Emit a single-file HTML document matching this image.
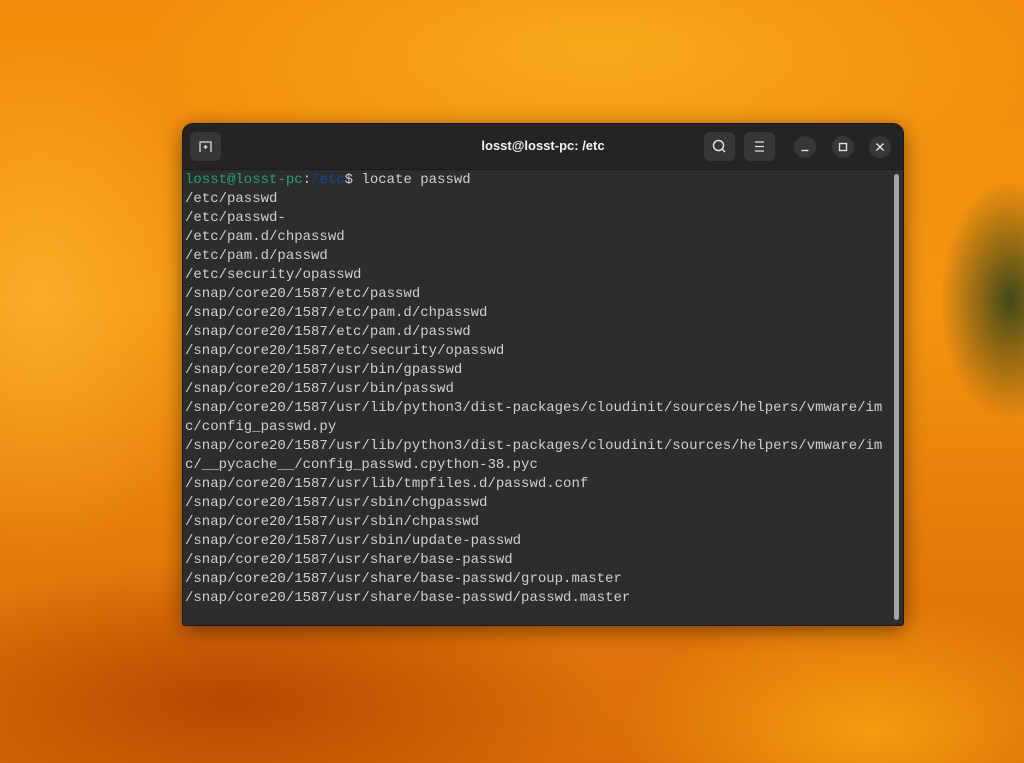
<!DOCTYPE html>
<html><head><meta charset="utf-8"><style>
html,body{margin:0;padding:0;width:1024px;height:763px;overflow:hidden}
body{position:relative;background:
radial-gradient(ellipse 70px 120px at 1010px 300px,rgba(45,65,25,.9),rgba(60,70,20,0) 100%),
radial-gradient(ellipse 180px 260px at 40px 300px,rgba(255,190,60,.55),rgba(255,170,20,0) 100%),
radial-gradient(ellipse 450px 160px at 600px 50px,rgba(252,185,35,.6),rgba(255,160,10,0) 100%),
radial-gradient(ellipse 380px 140px at 230px 700px,rgba(170,60,0,.75),rgba(200,90,0,0) 100%),
radial-gradient(ellipse 250px 130px at 870px 730px,rgba(255,175,20,.7),rgba(255,150,0,0) 100%),
linear-gradient(180deg,#f28c0c 0%,#f49410 40%,#e47a0a 72%,#d96c06 100%);}
.win{position:absolute;left:183px;top:124px;width:720px;height:501px;background:#2d2d2d;border-radius:10px 10px 2px 2px;box-shadow:0 0 0 1px #1a1a1a,0 4px 20px rgba(0,0,0,.5);overflow:hidden}
.hdr{height:45px;background:#242424;border-bottom:1px solid #1c1c1c;position:relative}
.title{position:absolute;left:0;right:0;top:14px;text-align:center;color:#f2f2f2;font:bold 13px "Liberation Sans",sans-serif}
.btn{position:absolute;top:8px;width:31px;height:29px;background:#363636;border-radius:6px}
.rb{position:absolute;top:12px;width:22px;height:22px;background:#373737;border-radius:50%}
.body{padding:1px 0 0 2px;font:14px/19px "Liberation Mono",monospace;color:#cfcfcf;white-space:pre}
.sb{position:absolute;left:711px;top:50px;width:5px;height:446px;background:#a5a5a5;border-radius:3px}
</style></head><body>
<div class="win">
<div class="hdr">
<div class="btn" style="left:7px"><svg width="31" height="29"><path d="M10 20V10h11v10M13.5 15h4M15.5 13v4" stroke="#ddd" stroke-width="1.3" fill="none"/></svg></div>
<div class="title">losst@losst-pc: /etc</div>
<div class="btn" style="left:521px"><svg width="31" height="29"><circle cx="14.5" cy="13.5" r="5" stroke="#ddd" stroke-width="1.5" fill="none"/><path d="M18 17l3 3" stroke="#ddd" stroke-width="1.5"/></svg></div>
<div class="btn" style="left:561px"><svg width="31" height="29"><path d="M11 10h9M11 14.5h9M11 19h9" stroke="#ddd" stroke-width="1.3"/></svg></div>
<div class="rb" style="left:611px"><svg width="22" height="22"><path d="M7.5 14.5h7" stroke="#ddd" stroke-width="1.4"/></svg></div>
<div class="rb" style="left:649px"><svg width="22" height="22"><rect x="7.5" y="7.5" width="7" height="7" stroke="#ddd" stroke-width="1.4" fill="none"/></svg></div>
<div class="rb" style="left:686px"><svg width="22" height="22"><path d="M7.5 7.5l7 7M14.5 7.5l-7 7" stroke="#ddd" stroke-width="1.5"/></svg></div>
</div>
<div class="body"><span style="color:#26a269">losst@losst-pc</span>:<span style="color:#12488b">/etc</span>$ locate passwd
/etc/passwd
/etc/passwd-
/etc/pam.d/chpasswd
/etc/pam.d/passwd
/etc/security/opasswd
/snap/core20/1587/etc/passwd
/snap/core20/1587/etc/pam.d/chpasswd
/snap/core20/1587/etc/pam.d/passwd
/snap/core20/1587/etc/security/opasswd
/snap/core20/1587/usr/bin/gpasswd
/snap/core20/1587/usr/bin/passwd
/snap/core20/1587/usr/lib/python3/dist-packages/cloudinit/sources/helpers/vmware/im
c/config_passwd.py
/snap/core20/1587/usr/lib/python3/dist-packages/cloudinit/sources/helpers/vmware/im
c/__pycache__/config_passwd.cpython-38.pyc
/snap/core20/1587/usr/lib/tmpfiles.d/passwd.conf
/snap/core20/1587/usr/sbin/chgpasswd
/snap/core20/1587/usr/sbin/chpasswd
/snap/core20/1587/usr/sbin/update-passwd
/snap/core20/1587/usr/share/base-passwd
/snap/core20/1587/usr/share/base-passwd/group.master
/snap/core20/1587/usr/share/base-passwd/passwd.master</div>
<div class="sb"></div>
</div>
</body></html>
